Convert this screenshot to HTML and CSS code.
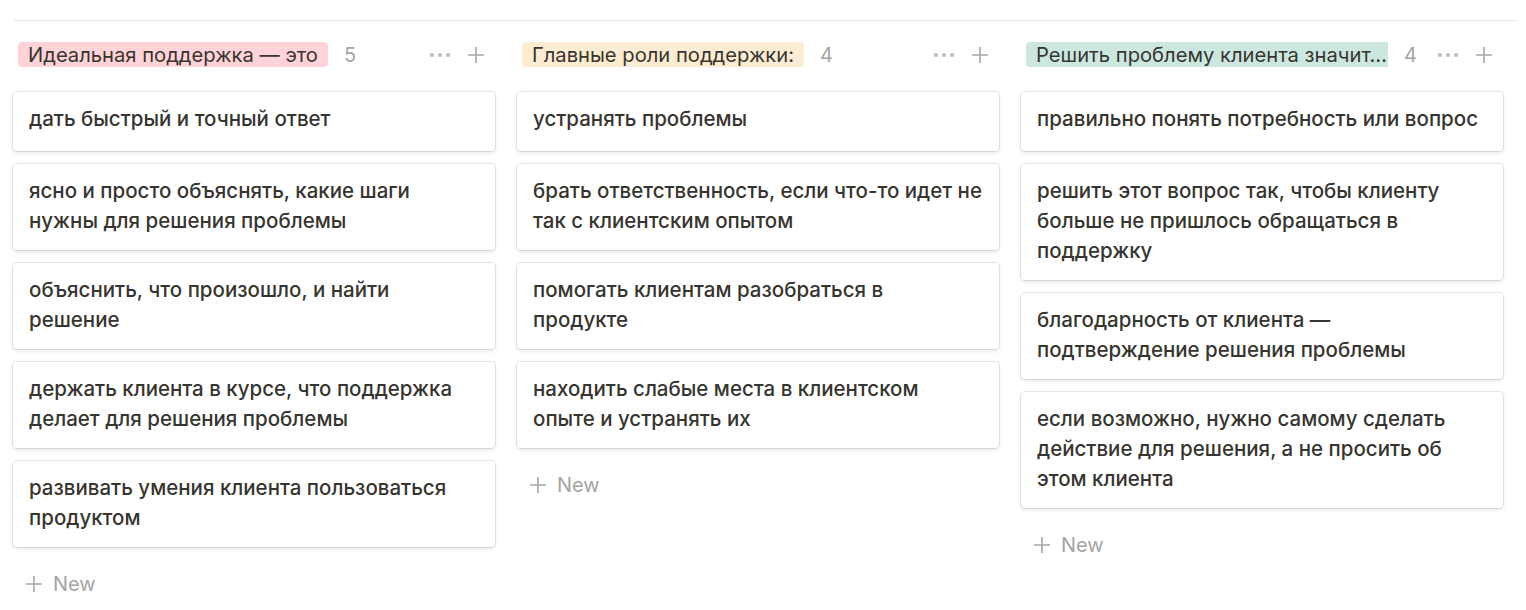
FILE: index.html
```html
<!DOCTYPE html>
<html lang="ru">
<head>
<meta charset="utf-8">
<title>Board</title>
<link rel="stylesheet" href="styles.css">
</head>
<body>
<div class="topline"></div>
<div class="board">
  <section class="column">
    <header class="col-head">
      <span class="tag tag-red">Идеальная поддержка — это</span>
      <span class="count">5</span>
      <span class="spacer"></span>
      <span class="icon dots"><i></i><i></i><i></i></span>
      <svg class="icon plus" viewBox="0 0 18 18"><path d="M9 1v16M1 9h16"/></svg>
    </header>
    <div class="card">дать быстрый и точный ответ</div>
    <div class="card">ясно и просто объяснять, какие шаги нужны для решения проблемы</div>
    <div class="card">объяснить, что произошло, и найти решение</div>
    <div class="card">держать клиента в курсе, что поддержка делает для решения проблемы</div>
    <div class="card">развивать умения клиента пользоваться продуктом</div>
    <div class="new"><svg class="new-plus" viewBox="0 0 18 18"><path d="M9 1v16M1 9h16"/></svg><span>New</span></div>
  </section>
  <section class="column">
    <header class="col-head">
      <span class="tag tag-yellow">Главные роли поддержки:</span>
      <span class="count">4</span>
      <span class="spacer"></span>
      <span class="icon dots"><i></i><i></i><i></i></span>
      <svg class="icon plus" viewBox="0 0 18 18"><path d="M9 1v16M1 9h16"/></svg>
    </header>
    <div class="card">устранять проблемы</div>
    <div class="card">брать ответственность, если что-то идет не так с клиентским опытом</div>
    <div class="card">помогать клиентам разобраться в продукте</div>
    <div class="card">находить слабые места в клиентском опыте и устранять их</div>
    <div class="new"><svg class="new-plus" viewBox="0 0 18 18"><path d="M9 1v16M1 9h16"/></svg><span>New</span></div>
  </section>
  <section class="column">
    <header class="col-head">
      <span class="tag tag-green tag-cut" title="Решить проблему клиента значит:">Решить проблему клиента значит…</span>
      <span class="count">4</span>
      <span class="spacer"></span>
      <span class="icon dots"><i></i><i></i><i></i></span>
      <svg class="icon plus" viewBox="0 0 18 18"><path d="M9 1v16M1 9h16"/></svg>
    </header>
    <div class="card">правильно понять потребность или вопрос</div>
    <div class="card">решить этот вопрос так, чтобы клиенту больше не пришлось обращаться в поддержку</div>
    <div class="card">благодарность от клиента — подтверждение решения проблемы</div>
    <div class="card">если возможно, нужно самому сделать действие для решения, а не просить об этом клиента</div>
    <div class="new"><svg class="new-plus" viewBox="0 0 18 18"><path d="M9 1v16M1 9h16"/></svg><span>New</span></div>
  </section>
</div>
</body>
</html>
```
FILE: styles.css
```css
html, body {
  margin: 0;
  padding: 0;
  background: #ffffff;
}
body {
  font-family: Inter, "Noto Sans", "Liberation Sans", sans-serif;
  color: #37352f;
  overflow: hidden;
}
.topline {
  margin: 20px 10px 0 14px;
  border-top: 1px solid #e6e6e4;
}
.board {
  display: flex;
  gap: 22px;
  padding: 0 0 0 13px;
}
.column {
  width: 482px;
  flex: 0 0 482px;
  display: flex;
  flex-direction: column;
}
.col-head {
  display: flex;
  align-items: center;
  height: 25px;
  margin-top: 21px;
  margin-bottom: 25px;
  padding: 0 10px 0 5px;
}
.tag {
  flex: 0 1 auto;
  min-width: 0;
  height: 25px;
  line-height: 25px;
  padding: 0 10px;
  border-radius: 4px;
  font-size: 20.2px;
  white-space: nowrap;
  overflow: hidden;
  text-overflow: ellipsis;
}
.tag-cut {
  padding-right: 1px;
  border-radius: 4px 0 0 4px;
}
.tag-red { background: #ffd3d8; }
.tag-yellow { background: #fbecd2; }
.tag-green { background: #cce7e0; }
.count {
  flex: 0 0 auto;
  margin-left: 16px;
  font-size: 20px;
  color: #a5a4a1;
}
.spacer {
  flex: 1 1 auto;
  min-width: 18px;
}
.icon { flex: 0 0 auto; }
.dots {
  display: flex;
  gap: 4px;
  width: 20px;
}
.dots i {
  display: block;
  width: 4px;
  height: 4px;
  border-radius: 50%;
  background: #bdbcba;
}
.plus {
  width: 18px;
  height: 18px;
  margin-left: 17px;
  fill: none;
  stroke: #a8a7a4;
  stroke-width: 1.6;
}
.card {
  box-sizing: border-box;
  min-height: 59px;
  margin-bottom: 13px;
  padding: 12px 16px 14px;
  line-height: 30px;
  font-size: 20.5px;
  font-weight: 500;
  background: #fff;
  border-radius: 4px;
  box-shadow: rgba(15, 15, 15, 0.1) 0 0 0 1px, rgba(15, 15, 15, 0.1) 0 2px 4px;
}
.new {
  display: flex;
  align-items: center;
  height: 30px;
  margin-top: 9px;
  padding-left: 12px;
  font-size: 20px;
  color: #a5a4a1;
}
.new-plus {
  width: 18px;
  height: 18px;
  margin-right: 10px;
  fill: none;
  stroke: #a8a7a4;
  stroke-width: 1.6;
}
```
